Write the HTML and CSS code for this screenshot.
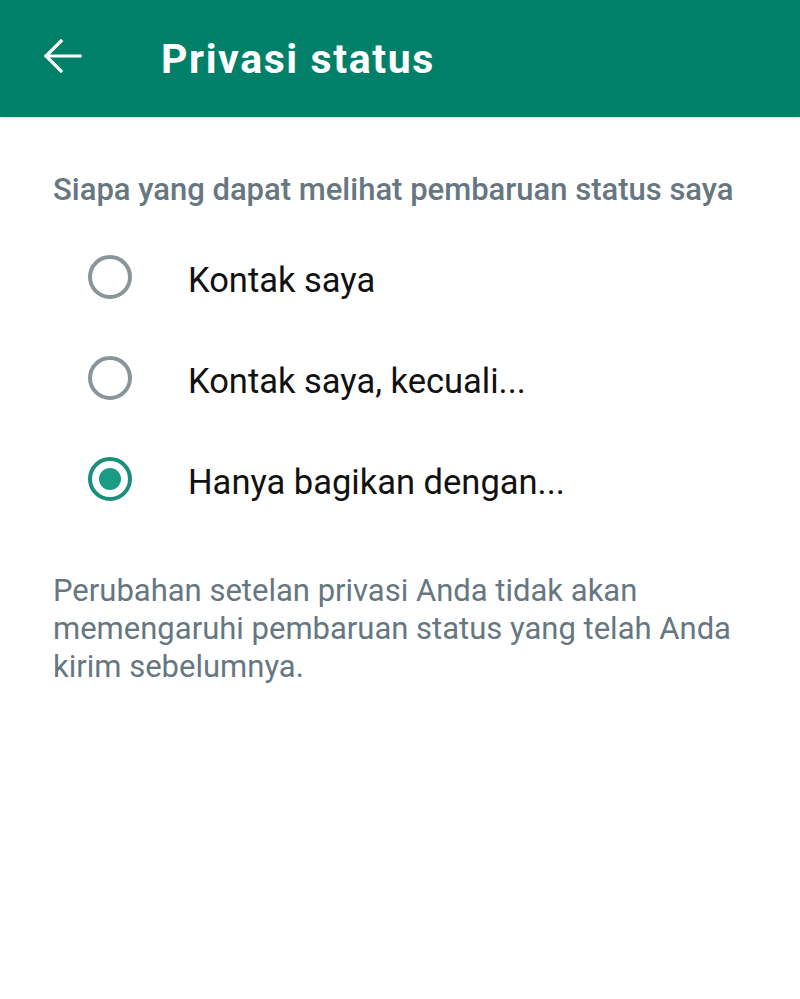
FILE: index.html
```html
<!DOCTYPE html>
<html lang="id">
<head>
<meta charset="utf-8">
<link rel="stylesheet" href="styles.css">
</head>
<body>
<header class="appbar">
  <svg class="back" viewBox="0 0 40 40" width="40" height="40"><path d="M4 17H38M19 2L4 17L19 32" fill="none" stroke="#fff" stroke-width="3.2" stroke-linecap="square"/></svg>
  <h1 class="title">Privasi status</h1>
</header>
<main class="content">
  <h2 class="section">Siapa yang dapat melihat pembaruan status saya</h2>
  <ul class="options">
    <li class="option"><span class="radio"></span><span class="label">Kontak saya</span></li>
    <li class="option"><span class="radio"></span><span class="label">Kontak saya, kecuali...</span></li>
    <li class="option"><span class="radio checked"></span><span class="label">Hanya bagikan dengan...</span></li>
  </ul>
  <p class="note">Perubahan setelan privasi Anda tidak akan memengaruhi pembaruan status yang telah Anda kirim sebelumnya.</p>
</main>
</body>
</html>
```
FILE: styles.css
```css
html, body { margin: 0; padding: 0; background: #fff; }
body { font-family: Roboto, "Noto Sans", sans-serif; width: 800px; }
.appbar {
  height: 117px;
  background: #008069;
  display: flex;
  align-items: center;
  box-shadow: 0 1px 3px rgba(0,0,0,0.15);
}
.back { margin-left: 42px; margin-top: 0; flex: none; }
.title {
  margin: 0 0 0 79px;
  color: #fff;
  font-size: 41px;
  line-height: 48px;
  font-weight: 700;
  letter-spacing: 1.6px;
}
.content { padding: 0 53px; }
.section {
  margin: 55px 0 0;
  font-size: 31px;
  line-height: 36px;
  font-weight: 500;
  color: #667781;
}
.options { list-style: none; margin: 18px 0 0; padding: 0; }
.option { display: flex; align-items: center; height: 101px; }
.radio {
  box-sizing: border-box;
  width: 44px; height: 44px;
  border-radius: 50%;
  border: 4px solid #8a9599;
  margin-left: 35px;
  position: relative;
  flex: none;
}
.radio.checked { border-color: #1a8f7b; }
.radio.checked::after {
  content: "";
  position: absolute;
  left: 50%; top: 50%;
  width: 22px; height: 22px;
  margin: -11px 0 0 -11px;
  border-radius: 50%;
  background: #1a9b84;
}
.label { margin-left: 56px; padding-top: 6px; font-size: 34.5px; line-height: 40px; color: #111; }
.note {
  margin: 43px 0 0;
  font-size: 31px;
  line-height: 38px;
  color: #667781;
}
```
